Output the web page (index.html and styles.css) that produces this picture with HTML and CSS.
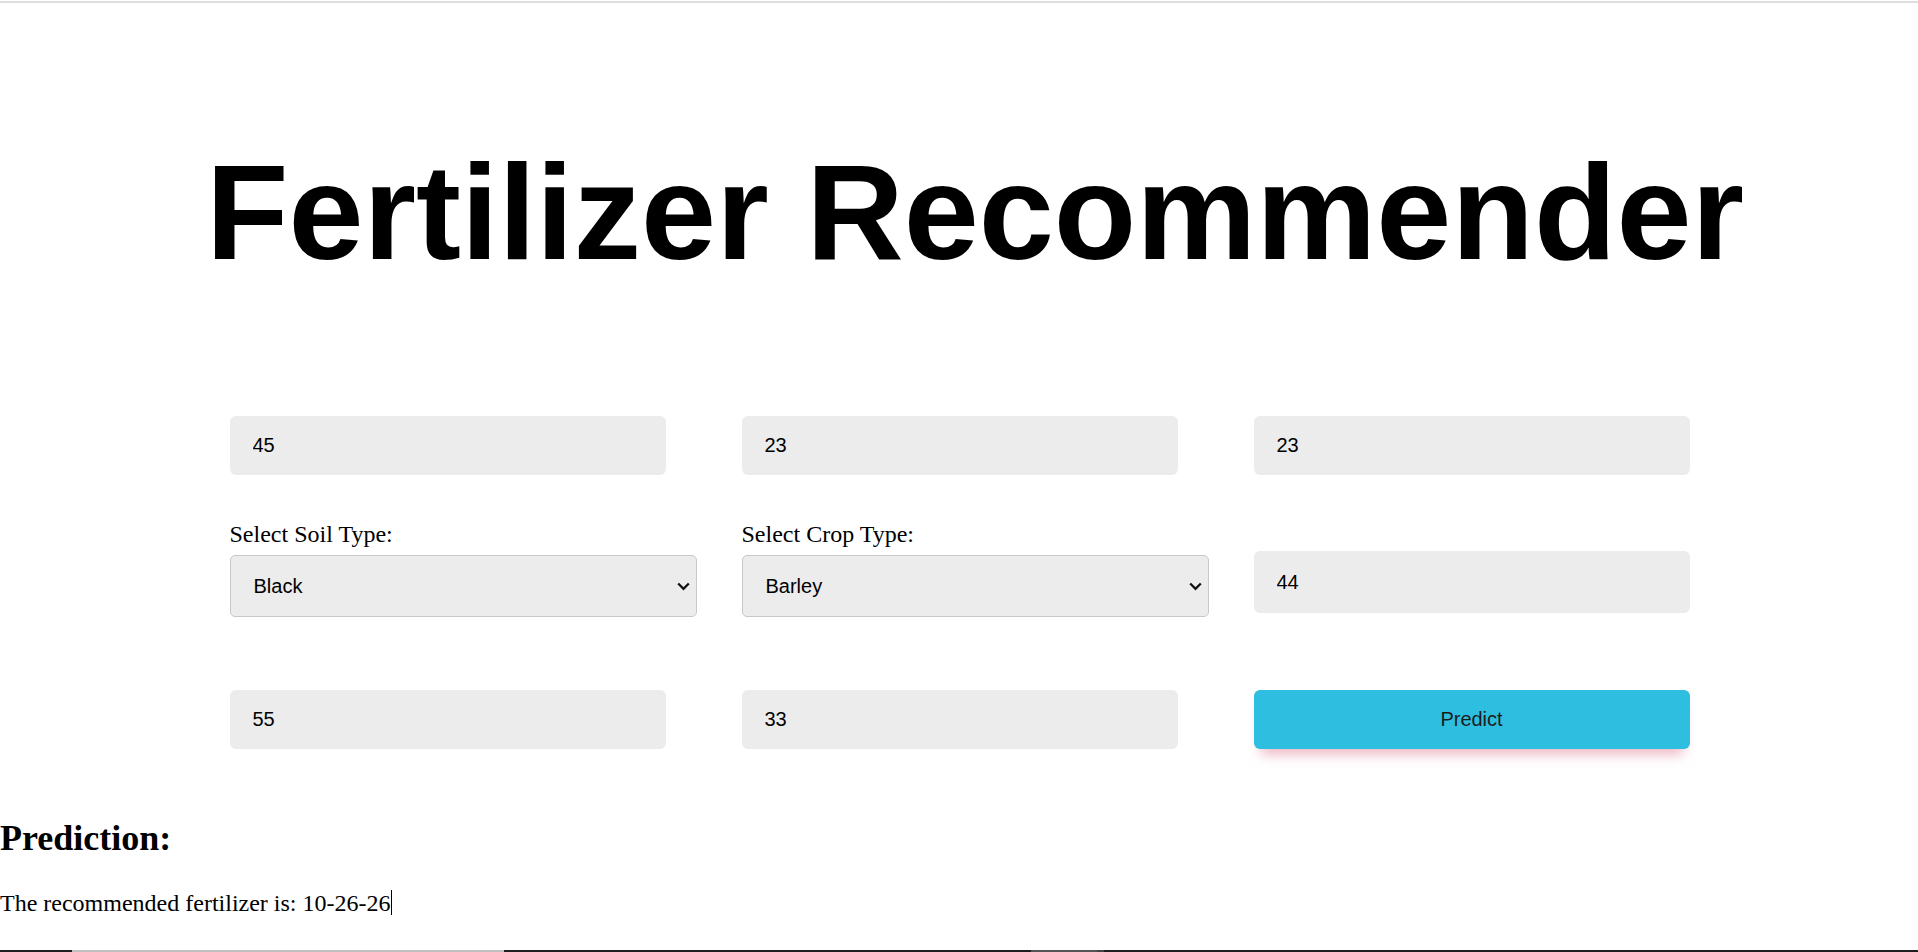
FILE: index.html
```html
<!DOCTYPE html>
<html lang="en">
<head>
<meta charset="utf-8">
<title>Fertilizer Recommender</title>
<link rel="stylesheet" href="styles.css">
</head>
<body>
<div class="topline"></div>
<div class="wrap">
  <h1 class="title">Fertilizer Recommender</h1>
  <form class="form">
    <div class="row row-1">
      <div class="cell"><input class="field" type="text" value="45"></div>
      <div class="cell"><input class="field" type="text" value="23"></div>
      <div class="cell"><input class="field" type="text" value="23"></div>
    </div>
    <div class="row row-2">
      <div class="cell">
        <label class="lbl">Select Soil Type:</label>
        <div class="select-wrap">
          <select class="sel"><option>Black</option><option>Clayey</option><option>Loamy</option><option>Red</option><option>Sandy</option></select>
          <svg class="chev" width="13" height="9" viewBox="0 0 13 9"><path d="M1.2 1.5 L6.5 6.8 L11.8 1.5" fill="none" stroke="#111" stroke-width="2.3"/></svg>
        </div>
      </div>
      <div class="cell">
        <label class="lbl">Select Crop Type:</label>
        <div class="select-wrap">
          <select class="sel"><option>Barley</option><option>Cotton</option><option>Maize</option><option>Paddy</option><option>Wheat</option></select>
          <svg class="chev" width="13" height="9" viewBox="0 0 13 9"><path d="M1.2 1.5 L6.5 6.8 L11.8 1.5" fill="none" stroke="#111" stroke-width="2.3"/></svg>
        </div>
      </div>
      <div class="cell cell-end"><input class="field field-tall" type="text" value="44"></div>
    </div>
    <div class="row row-3">
      <div class="cell"><input class="field" type="text" value="55"></div>
      <div class="cell"><input class="field" type="text" value="33"></div>
      <div class="cell"><button class="btn" type="button">Predict</button></div>
    </div>
  </form>
</div>
<h2 class="pred-title">Prediction:</h2>
<p class="pred-text">The recommended fertilizer is: 10-26-26<span class="caret"></span></p>
<div class="strip">
  <span class="seg s1"></span><span class="seg s2"></span><span class="seg s3"></span><span class="seg s4"></span><span class="seg s5"></span><span class="seg s6"></span>
</div>
</body>
</html>
```

FILE: styles.css
```css
html, body {
  margin: 0;
  padding: 0;
  background: #fff;
  color: #000;
  overflow: hidden;
}
body {
  font-family: "Liberation Serif", "Times New Roman", serif;
  height: 952px;
}
.topline {
  height: 2px;
  margin-top: 1px;
  background: #dedede;
}
.wrap {
  padding-left: 32px;
}
.title {
  margin: 132px 0 0 0;
  font-family: "Liberation Sans", Arial, sans-serif;
  font-weight: bold;
  font-size: 135px;
  line-height: 155px;
  text-align: center;
}
.form {
  width: 1491px;
  margin: 0 auto;
}
.row {
  display: grid;
  grid-template-columns: 467px 467px 467px;
  column-gap: 45px;
}
.row-1 { margin-top: 126px; }
.row-2 { margin-top: 45px; }
.row-3 { margin-top: 73px; }
.cell {
  display: flex;
  flex-direction: column;
}
.cell-end {
  justify-content: flex-end;
}
.field {
  box-sizing: border-box;
  width: 436px;
  height: 59px;
  padding: 0 23px;
  border: none;
  border-radius: 6px;
  background: #ececec;
  font-family: "Liberation Sans", Arial, sans-serif;
  font-size: 20px;
  color: #000;
  outline: none;
}
.field-tall {
  height: 62px;
  margin-bottom: 4px;
}
.lbl {
  display: block;
  font-size: 24px;
  line-height: 28px;
  margin-bottom: 7px;
}
.select-wrap {
  position: relative;
  width: 467px;
}
.sel {
  -webkit-appearance: none;
  appearance: none;
  box-sizing: border-box;
  width: 467px;
  height: 62px;
  padding: 0 40px 0 23px;
  border: 1px solid #c8c8c8;
  border-radius: 5px;
  background: #ececec;
  font-family: "Liberation Sans", Arial, sans-serif;
  font-size: 20px;
  color: #000;
  outline: none;
}
.chev {
  position: absolute;
  right: 7px;
  top: 27px;
  pointer-events: none;
}
.btn {
  box-sizing: border-box;
  width: 436px;
  height: 59px;
  border: none;
  border-radius: 6px;
  background: #2ebfe0;
  font-family: "Liberation Sans", Arial, sans-serif;
  font-size: 20px;
  color: #1c1c1c;
  box-shadow: 0 12px 12px -7px rgba(226, 140, 158, 0.65);
}
.pred-title {
  margin: 69px 0 0 0;
  font-size: 36px;
  line-height: 41px;
  font-weight: bold;
}
.pred-text {
  margin: 30px 0 0 0;
  font-size: 24px;
  line-height: 28px;
}
.caret {
  display: inline-block;
  width: 1px;
  height: 25px;
  background: #000;
  vertical-align: -4px;
}
.strip {
  display: flex;
  height: 2px;
  margin-top: 33px;
}
.seg { display: block; height: 2px; }
.s1 { width: 72px; background: #1e1e1e; }
.s2 { width: 432px; background: #c0c0c0; }
.s3 { width: 527px; background: #1e1e1e; }
.s4 { width: 66px; background: #555555; }
.s5 { width: 7px; background: #444444; }
.s6 { flex: 1; background: #1e1e1e; }
```
